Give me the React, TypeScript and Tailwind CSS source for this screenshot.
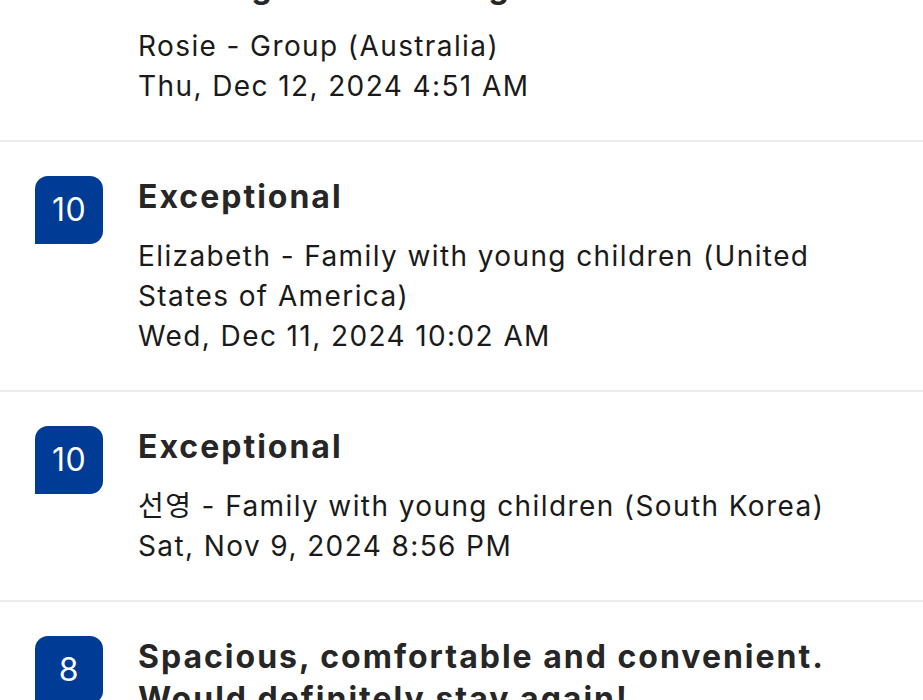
const reviews = [
  {
    score: 10,
    title: "Great apartment, clean and quiet,\nwalking distance to good restaurants",
    guest: "Rosie - Group (Australia)",
    date: "Thu, Dec 12, 2024 4:51 AM",
  },
  {
    score: 10,
    title: "Exceptional",
    guest: "Elizabeth - Family with young children (United States of America)",
    date: "Wed, Dec 11, 2024 10:02 AM",
  },
  {
    score: 10,
    title: "Exceptional",
    guest: "선영 - Family with young children (South Korea)",
    date: "Sat, Nov 9, 2024 8:56 PM",
  },
  {
    score: 8,
    title: "Spacious, comfortable and convenient. Would definitely stay again!",
    guest: "",
    date: "",
  },
];

const App = () => {
  return (
    <div
      className="h-[700px] overflow-hidden bg-white text-[#1a1a1a]"
      style={{ fontFamily: 'Inter, "Noto Sans CJK KR", sans-serif' }}
    >
      <div className="-mt-[110px]">
        {reviews.map((review, index) => (
          <div
            key={index}
            className="flex gap-[35px] px-[35px] pt-[34px] pb-[34px] border-b-2 border-[#ececec]"
          >
            <div className="w-[68px] h-[68px] shrink-0 flex items-center justify-center bg-[#003b95] text-white text-[32px] tracking-[0.5px] rounded-t-[13px] rounded-br-[13px]">
              {review.score}
            </div>
            <div className="flex-1">
              <h3 className="text-[32px] leading-[42px] font-bold tracking-[2px] text-[#262626] whitespace-pre-line">
                {review.title}
              </h3>
              {review.guest && (
                <div className="mt-[18px] text-[28px] leading-[40px] tracking-[1.4px] text-[#1a1a1a]">
                  <p>{review.guest}</p>
                  <p>{review.date}</p>
                </div>
              )}
            </div>
          </div>
        ))}
      </div>
    </div>
  );
};

export default App;
